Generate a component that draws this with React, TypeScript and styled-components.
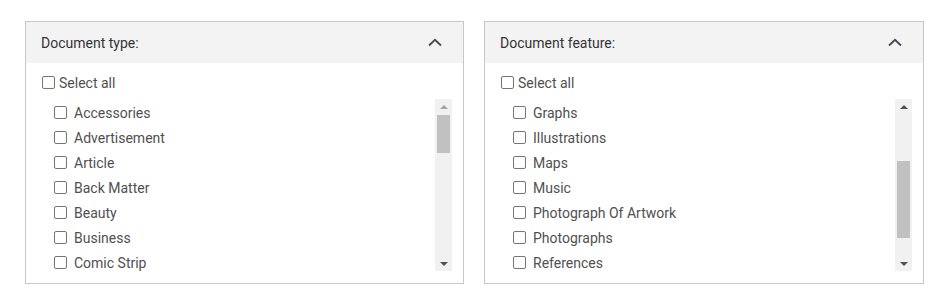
import React from 'react'
import styled, { createGlobalStyle } from 'styled-components'

const GlobalStyle = createGlobalStyle`
  body {
    margin: 0;
    background: #ffffff;
    font-family: Roboto, 'Liberation Sans', Arial, sans-serif;
  }
`

const Page = styled.div`
  display: flex;
  gap: 20px;
  padding: 21px 0 0 25px;
`

const Panel = styled.section<{ wide?: boolean }>`
  width: ${({ wide }) => (wide ? 440 : 439)}px;
  height: 263px;
  box-sizing: border-box;
  border: 1px solid #c8c8c8;
  display: flex;
  flex-direction: column;
`

const Header = styled.div`
  height: 41px;
  flex-shrink: 0;
  background: #f3f3f3;
  display: flex;
  align-items: center;
  justify-content: space-between;
  padding: 0 21px 0 15px;
  font-size: 14px;
  color: #333333;
`

const Body = styled.div`
  flex: 1;
  display: flex;
  flex-direction: column;
  padding: 13px 11px 12px 16px;
  min-height: 0;
`

const Row = styled.label<{ indent?: number }>`
  display: flex;
  align-items: center;
  gap: 7px;
  height: 25px;
  flex-shrink: 0;
  padding-left: ${({ indent }) => indent ?? 0}px;
  font-size: 14px;
  color: #505050;
`

const SelectAllRow = styled(Row)`
  gap: 4px;
  height: 13px;
  margin-bottom: 10px;
`

const Box = styled.input.attrs({ type: 'checkbox' })`
  appearance: none;
  margin: 0;
  width: 13px;
  height: 13px;
  box-sizing: border-box;
  border: 1px solid #767676;
  border-radius: 2px;
  background: #ffffff;
  flex-shrink: 0;
`

const ListArea = styled.div`
  flex: 1;
  display: flex;
  min-height: 0;
`

const Items = styled.div`
  flex: 1;
  overflow: hidden;
  padding-top: 1px;
`

const Scrollbar = styled.div`
  width: 17px;
  flex-shrink: 0;
  background: #f1f1f1;
  display: flex;
  flex-direction: column;
`

const Arrow = styled.div<{ down?: boolean; disabled?: boolean }>`
  height: 15px;
  flex-shrink: 0;
  display: flex;
  align-items: center;
  justify-content: center;

  &:before {
    content: '';
    width: 0;
    height: 0;
    border-left: 4px solid transparent;
    border-right: 4px solid transparent;
    ${({ down, disabled }) =>
      down
        ? `border-top: 4px solid ${disabled ? '#a3a3a3' : '#505050'};`
        : `border-bottom: 4px solid ${disabled ? '#a3a3a3' : '#505050'};`}
  }
`

const Track = styled.div`
  flex: 1;
  padding: 0 2px;
`

const Thumb = styled.div`
  background: #c1c1c1;
`

const Chevron = () => (
  <svg width="14" height="9" viewBox="0 0 14 9">
    <polyline
      points="1,7.5 7,1.8 13,7.5"
      fill="none"
      stroke="#4a4a55"
      strokeWidth="1.9"
    />
  </svg>
)

interface FilterPanelProps {
  title: string
  items: string[]
  thumbTop: number
  thumbHeight: number
  atTop?: boolean
  wide?: boolean
}

const FilterPanel = ({ title, items, thumbTop, thumbHeight, atTop, wide }: FilterPanelProps) => (
  <Panel wide={wide}>
    <Header>
      <span>{title}</span>
      <Chevron />
    </Header>
    <Body>
      <SelectAllRow>
        <Box />
        <span>Select all</span>
      </SelectAllRow>
      <ListArea>
        <Items>
          {items.map((item) => (
            <Row key={item} indent={12}>
              <Box />
              <span>{item}</span>
            </Row>
          ))}
        </Items>
        <Scrollbar>
          <Arrow disabled={atTop} />
          <Track>
            <Thumb style={{ marginTop: thumbTop, height: thumbHeight }} />
          </Track>
          <Arrow down />
        </Scrollbar>
      </ListArea>
    </Body>
  </Panel>
)

const App = () => (
  <>
    <GlobalStyle />
    <Page>
      <FilterPanel
        title="Document type:"
        items={['Accessories', 'Advertisement', 'Article', 'Back Matter', 'Beauty', 'Business', 'Comic Strip']}
        thumbTop={1}
        thumbHeight={38}
        atTop
      />
      <FilterPanel
        title="Document feature:"
        items={['Graphs', 'Illustrations', 'Maps', 'Music', 'Photograph Of Artwork', 'Photographs', 'References']}
        thumbTop={47}
        thumbHeight={77}
        wide
      />
    </Page>
  </>
)

export default App
